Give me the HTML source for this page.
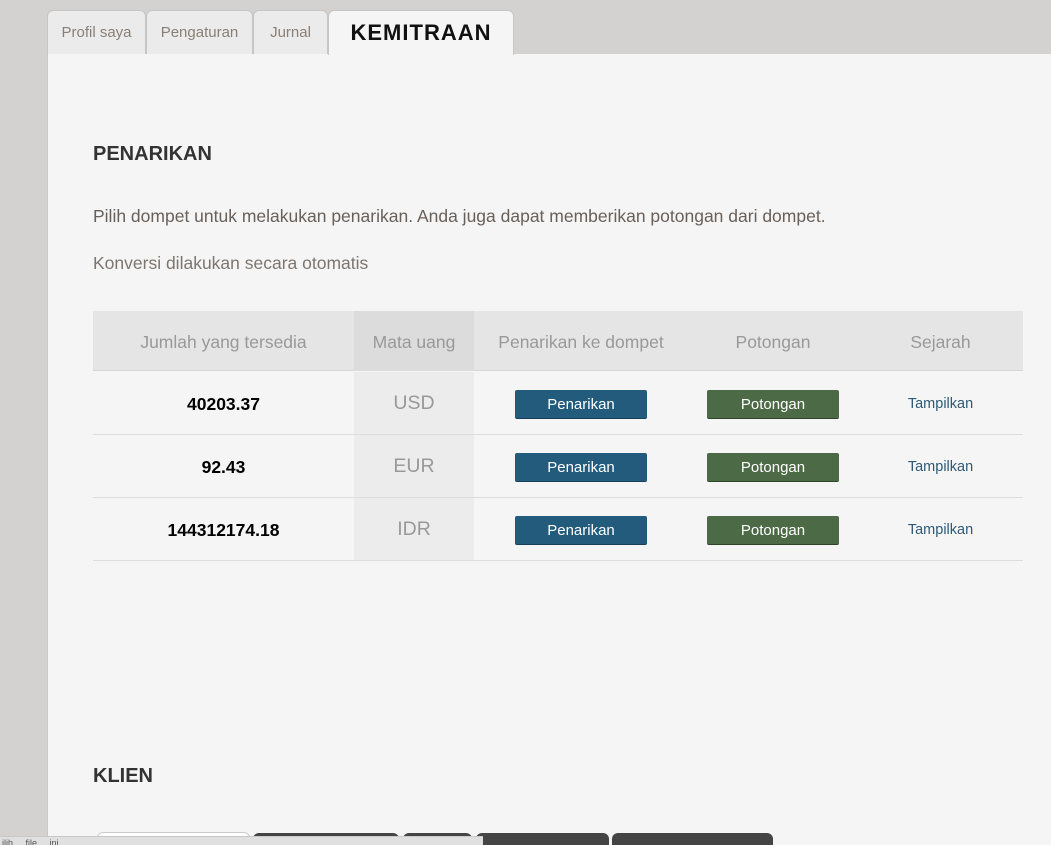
<!DOCTYPE html>
<html><head><meta charset="utf-8"><style>
*{box-sizing:border-box;margin:0;padding:0}
html,body{width:1051px;height:845px;overflow:hidden}
body{background:#d3d2d0;font-family:"Liberation Sans",sans-serif;position:relative}
.panel{position:absolute;left:47px;top:54px;width:1004px;height:791px;background:#f5f5f5;border-left:1px solid #c8c8c8}
.tab{position:absolute;top:10px;height:44px;background:#ebebeb;border:1px solid #c6c6c6;border-bottom:none;border-radius:6px 6px 0 0;color:#8a7f76;font-size:15px;text-align:center;line-height:43px}
.tab.act{background:#f5f5f5;top:10px;height:45px;color:#111;font-weight:bold;font-size:22px;letter-spacing:1px}
.a{position:absolute}
h2{position:absolute;left:93px;font-size:20px;color:#333;font-weight:bold}
p{position:absolute;left:93px;font-size:17.5px;color:#6a605a}
.th{position:absolute;top:311px;height:60px;line-height:62px;text-align:center;color:#999;font-size:17.5px}
.row{position:absolute;left:93px;width:930px;height:63px;border-bottom:1px solid #dcdcdc}
.c{position:absolute;text-align:center;height:62px;line-height:64px}
.b{position:absolute;width:132px;height:29px;border-radius:2px;color:#fff;font-size:15px;text-align:center;line-height:29px;top:18px}
.bl{background:#225b7b;border-bottom:1px solid #16405a}
.gr{background:#4b6a45;border-bottom:1px solid #2d4429}
</style></head><body>
<div class="panel"></div>
<div class="tab" style="left:47px;width:99px">Profil saya</div>
<div class="tab" style="left:146px;width:107px">Pengaturan</div>
<div class="tab" style="left:253px;width:75px">Jurnal</div>
<div class="tab act" style="left:328px;width:186px">KEMITRAAN</div>
<h2 style="top:143px">PENARIKAN</h2>
<p style="top:206px">Pilih dompet untuk melakukan penarikan. Anda juga dapat memberikan potongan dari dompet.</p>
<p style="top:253px;color:#7d7570">Konversi dilakukan secara otomatis</p>
<div class="a" style="left:93px;top:311px;width:930px;height:60px;background:#e5e5e5;border-bottom:1px solid #d6d6d6"></div>
<div class="a" style="left:354px;top:311px;width:120px;height:60px;background:#dcdcdc"></div>
<div class="a" style="left:354px;top:372px;width:120px;height:189px;background:#ececec"></div>
<div class="th" style="left:93px;width:261px">Jumlah yang tersedia</div>
<div class="th" style="left:354px;width:120px">Mata uang</div>
<div class="th" style="left:474px;width:214px">Penarikan ke dompet</div>
<div class="th" style="left:688px;width:170px">Potongan</div>
<div class="th" style="left:858px;width:165px">Sejarah</div>
<div class="row" style="top:372px"><div class="c" style="left:0;width:261px;font-weight:bold;font-size:17.5px;color:#000">40203.37</div><div class="c" style="left:261px;width:120px;color:#999;font-size:19.5px;line-height:62px">USD</div><div class="b bl" style="left:422px">Penarikan</div><div class="b gr" style="left:614px">Potongan</div><div class="c" style="left:765px;width:165px;color:#2c5a78;font-size:14.5px">Tampilkan</div></div>
<div class="row" style="top:435px"><div class="c" style="left:0;width:261px;font-weight:bold;font-size:17.5px;color:#000">92.43</div><div class="c" style="left:261px;width:120px;color:#999;font-size:19.5px;line-height:62px">EUR</div><div class="b bl" style="left:422px">Penarikan</div><div class="b gr" style="left:614px">Potongan</div><div class="c" style="left:765px;width:165px;color:#2c5a78;font-size:14.5px">Tampilkan</div></div>
<div class="row" style="top:498px"><div class="c" style="left:0;width:261px;font-weight:bold;font-size:17.5px;color:#000">144312174.18</div><div class="c" style="left:261px;width:120px;color:#999;font-size:19.5px;line-height:62px">IDR</div><div class="b bl" style="left:422px">Penarikan</div><div class="b gr" style="left:614px">Potongan</div><div class="c" style="left:765px;width:165px;color:#2c5a78;font-size:14.5px">Tampilkan</div></div>
<h2 style="top:765px">KLIEN</h2>
<div class="a" style="left:97px;top:832px;width:153px;height:13px;background:#fff;border:1px solid #ccc;border-bottom:none;border-radius:6px 6px 0 0"></div>
<div class="a" style="left:253px;top:833px;width:146px;height:12px;background:#444;border-radius:6px 6px 0 0"></div>
<div class="a" style="left:403px;top:833px;width:69px;height:12px;background:#444;border-radius:6px 6px 0 0"></div>
<div class="a" style="left:476px;top:833px;width:133px;height:12px;background:#444;border-radius:6px 6px 0 0"></div>
<div class="a" style="left:612px;top:833px;width:161px;height:12px;background:#444;border-radius:6px 6px 0 0"></div>
<div class="a" style="left:0;top:836px;width:483px;height:9px;background:#e0e0e0;border-top:1px solid #c8c8c8;font-size:9px;color:#555;line-height:12px;padding-left:2px;overflow:hidden">ilih ... file ... ini ...</div>
</body></html>
